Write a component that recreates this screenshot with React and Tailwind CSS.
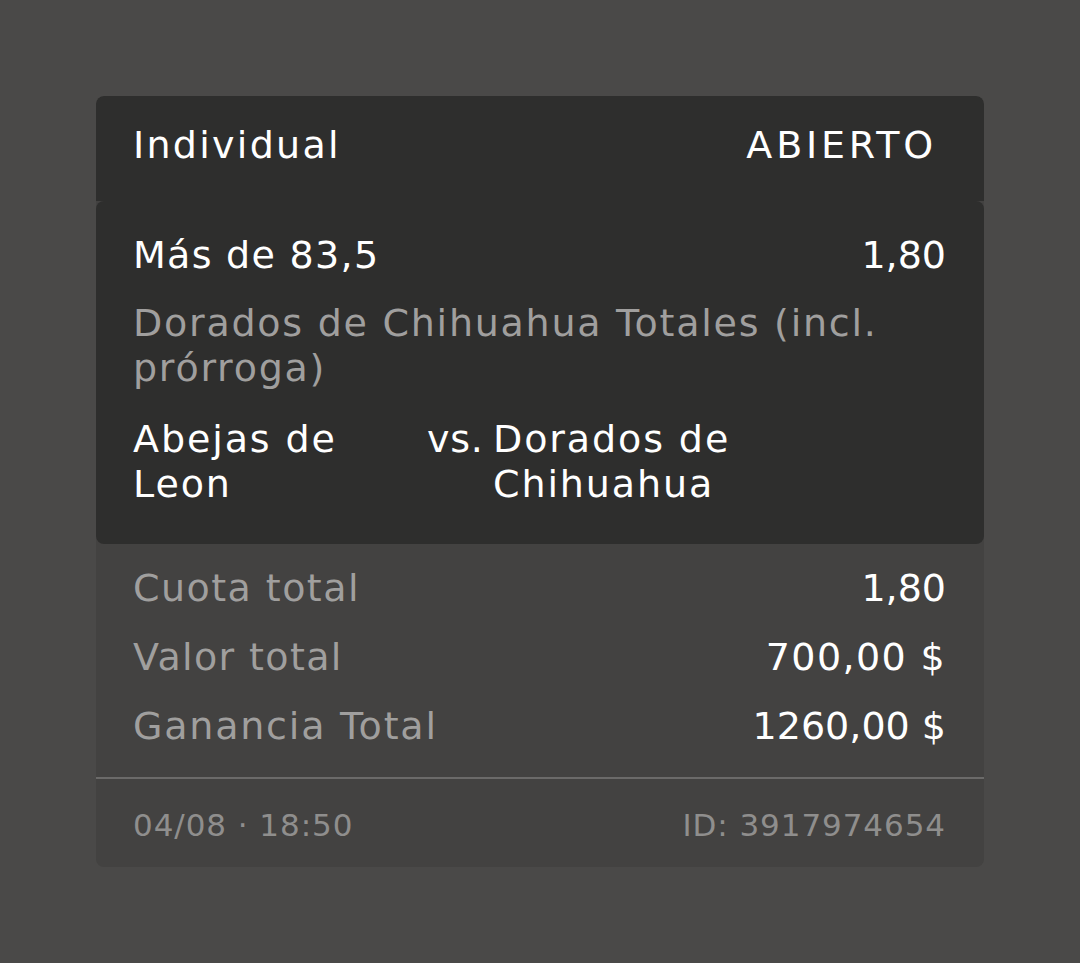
export default function App() {
  const font = { fontFamily: '"DejaVu Sans", "Noto Sans", sans-serif' };
  return (
    <div className="min-h-screen w-full bg-[#4a4948] pt-[96px] pl-[96px]" style={font}>
      <div className="w-[888px] rounded-lg bg-[#434241] overflow-hidden">
        {/* header */}
        <div className="h-[105px] bg-[#2e2e2d] rounded-t-lg flex items-center justify-between pl-[37px] pr-[47px] pb-[6px] text-[38px] text-white">
          <span className="tracking-[0.06em]">Individual</span>
          <span className="tracking-[0.1em]">ABIERTO</span>
        </div>

        {/* selection */}
        <div className="bg-[#2e2e2d] rounded-lg pt-[32px] pb-[37px] pl-[37px] pr-[38px] text-[38px] leading-[45px]">
          <div className="flex justify-between text-white">
            <span className="tracking-[0.034em]">Más de 83,5</span>
            <span>1,80</span>
          </div>
          <div className="mt-[23px] text-[#a09f9e] tracking-[0.046em]">
            Dorados de Chihuahua Totales (incl. prórroga)
          </div>
          <div className="mt-[26px] flex text-white tracking-[0.05em]">
            <div className="w-[294px]">Abejas de Leon</div>
            <div className="w-[66px] tracking-[0.02em]">vs.</div>
            <div className="w-[270px]">Dorados de Chihuahua</div>
          </div>
        </div>

        {/* totals */}
        <div className="pt-[22px] pb-[28px] pl-[37px] pr-[38px] text-[38px] leading-[45px] flex flex-col gap-[24px]">
          <div className="flex justify-between">
            <span className="text-[#a09f9e] tracking-[0.038em]">Cuota total</span>
            <span className="text-white">1,80</span>
          </div>
          <div className="flex justify-between">
            <span className="text-[#a09f9e] tracking-[0.036em]">Valor total</span>
            <span className="text-white tracking-[0.036em]">700,00 $</span>
          </div>
          <div className="flex justify-between">
            <span className="text-[#a09f9e] tracking-[0.047em]">Ganancia Total</span>
            <span className="text-white">1260,00 $</span>
          </div>
        </div>

        <div className="h-[2px] bg-[#6b6a69]" />

        {/* footer */}
        <div className="h-[88px] flex items-center justify-between pl-[37px] pr-[38px] pt-[4px] text-[31px] text-[#8f8e8d] tracking-[0.03em]">
          <span>04/08 · 18:50</span>
          <span>ID: 3917974654</span>
        </div>
      </div>
    </div>
  );
}
